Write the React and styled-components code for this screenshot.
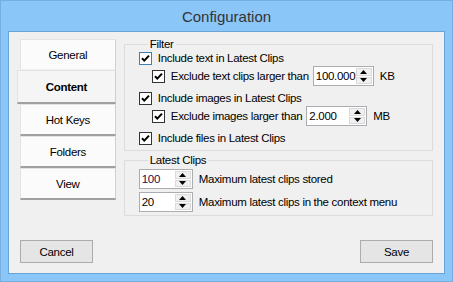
import React from "react";
import styled, { createGlobalStyle } from "styled-components";

const Global = createGlobalStyle`
  html, body {
    margin: 0;
    padding: 0;
    background: #8ac5f7;
  }
  * {
    box-sizing: border-box;
  }
`;

const Window = styled.div`
  width: 453px;
  height: 282px;
  display: flex;
  flex-direction: column;
  background: #8bc6f8;
  border: 1px solid #76aee0;
  padding: 0 7px 7px 7px;
  font-family: "Liberation Sans", Arial, sans-serif;
  font-size: 11.5px;
  letter-spacing: -0.3px;
  color: #000;
`;

const TitleBar = styled.div`
  height: 30px;
  display: flex;
  align-items: center;
  justify-content: center;
  font-size: 15px;
  letter-spacing: 0;
  color: #333;
  padding-top: 1px;
`;

const Client = styled.div`
  flex: 1;
  background: #f0f0f0;
  border: 1px solid #6aa3d6;
  display: flex;
  flex-direction: column;
  padding: 6px 11px 10px 11px;
`;

const Main = styled.div`
  flex: 1;
  display: flex;
  gap: 8px;
`;

const TabList = styled.div`
  width: 96px;
  display: flex;
  flex-direction: column;
  padding-top: 1px;
`;

const Tab = styled.div`
  height: ${(p) => (p.$active ? "34px" : "32px")};
  margin: ${(p) => (p.$active ? "-1px 0 0 -3px" : "0")};
  display: flex;
  align-items: center;
  justify-content: center;
  background: ${(p) => (p.$active ? "#f5f5f5" : "#fbfbfb")};
  border: 1px solid #e3e3e3;
  border-bottom: 2px solid ${(p) => (p.$first ? "#f0f0f0" : "#a0a0a0")};
  border-right: 1px solid #d0d0d0;
  font-weight: ${(p) => (p.$active ? "bold" : "normal")};
  color: #000;
  position: relative;
  z-index: ${(p) => (p.$active ? 1 : 0)};
`;

const Panels = styled.div`
  width: 310px;
  display: flex;
  flex-direction: column;
  gap: 3px;
`;

const Group = styled.fieldset`
  margin: 0;
  border: 1px solid #dcdcdc;
  padding: ${(p) => p.$pad};
  display: flex;
  flex-direction: column;
  min-width: 0;
`;

const Legend = styled.legend`
  padding: 0 2px;
  margin-left: 9px;
  line-height: 12px;
  color: #000;
`;

const Row = styled.div`
  height: ${(p) => p.$h || 16}px;
  display: flex;
  align-items: center;
  padding-left: ${(p) => (p.$indent ? 13 : 0)}px;
  margin-top: ${(p) => p.$mt || 0}px;
`;

const Box = styled.span`
  width: 13px;
  height: 13px;
  border: 1px solid ${(p) => (p.$focus ? "#3c7fb1" : "#333")};
  background: #fff;
  display: inline-flex;
  align-items: center;
  justify-content: center;
  flex-shrink: 0;
  margin-right: 6px;
`;

const Label = styled.span`
  white-space: nowrap;
  margin-right: ${(p) => p.$mr || 0}px;
`;

const Spin = styled.div`
  width: ${(p) => p.$w}px;
  height: 20px;
  display: flex;
  background: #fff;
  border: 1px solid #abadb3;
  margin-right: 6px;
  padding: 1px;
`;

const SpinText = styled.div`
  flex: 1;
  line-height: 16px;
  padding-left: 1px;
  color: ${(p) => p.$color || "#000"};
`;

const SpinButtons = styled.div`
  width: 16px;
  display: flex;
  flex-direction: column;
  gap: 1px;
`;

const SpinButton = styled.div`
  flex: 1;
  background: #f0f0f0;
  border: 1px solid #dadada;
  display: flex;
  align-items: center;
  justify-content: center;
`;

const Footer = styled.div`
  display: flex;
  justify-content: space-between;
  height: 23px;
`;

const Button = styled.button`
  width: 73px;
  height: 23px;
  background: #e5e5e5;
  border: 1px solid #acacac;
  font: inherit;
  letter-spacing: inherit;
  color: #000;
  padding: 0;
`;

const Check = ({ focus }) => (
  <Box $focus={focus}>
    <svg width="9" height="9" viewBox="0 0 9 9">
      <path d="M1 4.2 L3.3 6.6 L8 1.6" fill="none" stroke="#000" strokeWidth="2" />
    </svg>
  </Box>
);

const Arrow = ({ up }) => (
  <svg width="7" height="4" viewBox="0 0 7 4">
    <path d={up ? "M0 4 L3.5 0 L7 4 Z" : "M0 0 L3.5 4 L7 0 Z"} fill="#000" />
  </svg>
);

const Spinner = ({ value, width, color }) => (
  <Spin $w={width}>
    <SpinText $color={color}>{value}</SpinText>
    <SpinButtons>
      <SpinButton>
        <Arrow up />
      </SpinButton>
      <SpinButton>
        <Arrow />
      </SpinButton>
    </SpinButtons>
  </Spin>
);

const tabs = ["General", "Content", "Hot Keys", "Folders", "View"];

export default function App() {
  return (
    <>
      <Global />
      <Window>
        <TitleBar>Configuration</TitleBar>
        <Client>
          <Main>
            <TabList>
              {tabs.map((t, i) => (
                <Tab key={t} $active={t === "Content"} $first={i === 0}>
                  {t}
                </Tab>
              ))}
            </TabList>
            <Panels>
              <Group $pad="0 0 4px 14px">
                <Legend>Filter</Legend>
                <Row>
                  <Check focus />
                  <Label>Include text in Latest Clips</Label>
                </Row>
                <Row $indent $h={20}>
                  <Check />
                  <Label $mr={4}>Exclude text clips larger than</Label>
                  <Spinner value="100.000" width={61} />
                  <Label>KB</Label>
                </Row>
                <Row $mt={4}>
                  <Check />
                  <Label>Include images in Latest Clips</Label>
                </Row>
                <Row $indent $h={20}>
                  <Check />
                  <Label $mr={4}>Exclude images larger than</Label>
                  <Spinner value="2.000" width={61} />
                  <Label>MB</Label>
                </Row>
                <Row $mt={4}>
                  <Check />
                  <Label>Include files in Latest Clips</Label>
                </Row>
              </Group>
              <Group $pad="3px 0 3px 14px">
                <Legend>Latest Clips</Legend>
                <Row $h={20}>
                  <Spinner value="100" width={54} color="#2a0a4a" />
                  <Label>Maximum latest clips stored</Label>
                </Row>
                <Row $h={20} $mt={3}>
                  <Spinner value="20" width={54} />
                  <Label>Maximum latest clips in the context menu</Label>
                </Row>
              </Group>
            </Panels>
          </Main>
          <Footer>
            <Button>Cancel</Button>
            <Button>Save</Button>
          </Footer>
        </Client>
      </Window>
    </>
  );
}
